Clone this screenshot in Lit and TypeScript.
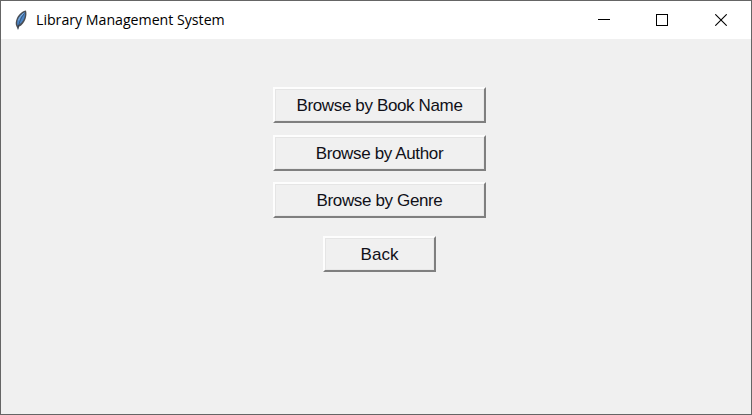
import { LitElement, html, css } from "lit";
import { customElement } from "lit/decorators.js";

@customElement("app-root")
export class AppRoot extends LitElement {
  static styles = css`
    :host {
      display: flex;
      flex-direction: column;
      box-sizing: border-box;
      width: 752px;
      height: 415px;
      border: 1px solid #656565;
      background: #f0f0f0;
      color: #000;
      overflow: hidden;
    }
    .titlebar {
      display: flex;
      align-items: center;
      height: 38px;
      flex: none;
      background: #fff;
    }
    .feather {
      width: 20px;
      height: 26px;
      margin-left: 9px;
      margin-top: -3px;
      flex: none;
    }
    .title {
      margin-left: 6px;
      flex: 1;
      font: 14.2px/20px "Open Sans", "Noto Sans", sans-serif;
      letter-spacing: -0.02px;
      white-space: nowrap;
    }
    .control {
      display: flex;
      justify-content: center;
      width: 58px;
      flex: none;
    }
    .control.last {
      width: 60px;
    }
    .menu {
      display: flex;
      flex-direction: column;
      align-items: flex-start;
      padding: 48px 0 0 272px;
    }
    .btn {
      box-sizing: border-box;
      width: 213px;
      height: 36px;
      margin: 0 0 11.5px;
      padding: 2px 0 0;
      border: 2px solid;
      border-color: #fdfdfd #7f7f7f #7f7f7f #fdfdfd;
      box-shadow: inset 1px 1px #e5e5e5, inset -1px -1px #e8e8e8;
      background: #f0f0f0;
      color: #101018;
      font: 17px/30px "Liberation Sans", Arial, sans-serif;
      letter-spacing: -0.36px;
      text-align: center;
      white-space: nowrap;
    }
    .btn.back {
      width: 113px;
      margin: 6px 0 0 50px;
      letter-spacing: 0;
    }
  `;

  render() {
    return html`
      <header class="titlebar">
        <svg class="feather" viewBox="0 0 20 26">
          <path d="M16 4.500C12.500 5 9 8 7 12C5.500 15.500 5.300 18.500 6.500 20.500L8 23.500L9 20.800C12 19.500 14.500 16 15.500 13C16.500 10 16.800 7.500 16 4.500Z" fill="#4a4d53"/>
          <path d="M15 6C12 7.300 9 10.300 7.700 13.800C7 16 7 18 7.600 19.400C11 18 13.200 15 14.300 12C15 9.800 15.200 7.500 15 6Z" fill="#4c86c7"/>
          <path d="M14.500 7.500C11.500 11 9 15.500 8 23.500" fill="none" stroke="#26384f" stroke-width=".6"/>
          <path d="M13.500 7.500C11.200 9.300 9.500 11.500 8.600 14.300" fill="none" stroke="#91b9df" stroke-width="1"/>
        </svg>
        <span class="title">Library Management System</span>
        <span class="control">
          <svg width="12" height="12" shape-rendering="crispEdges"><path d="M0 5.500H12" stroke="#000"/></svg>
        </span>
        <span class="control">
          <svg width="12" height="12"><rect x=".5" y=".5" width="11" height="11" fill="none" stroke="#000"/></svg>
        </span>
        <span class="control last">
          <svg width="12" height="12"><path d="M.3 .3L11.700 11.700M11.700 .3L.3 11.700" stroke="#000" stroke-width="1.100"/></svg>
        </span>
      </header>
      <main class="menu">
        <button class="btn">Browse by Book Name</button>
        <button class="btn">Browse by Author</button>
        <button class="btn">Browse by Genre</button>
        <button class="btn back">Back</button>
      </main>
    `;
  }
}
